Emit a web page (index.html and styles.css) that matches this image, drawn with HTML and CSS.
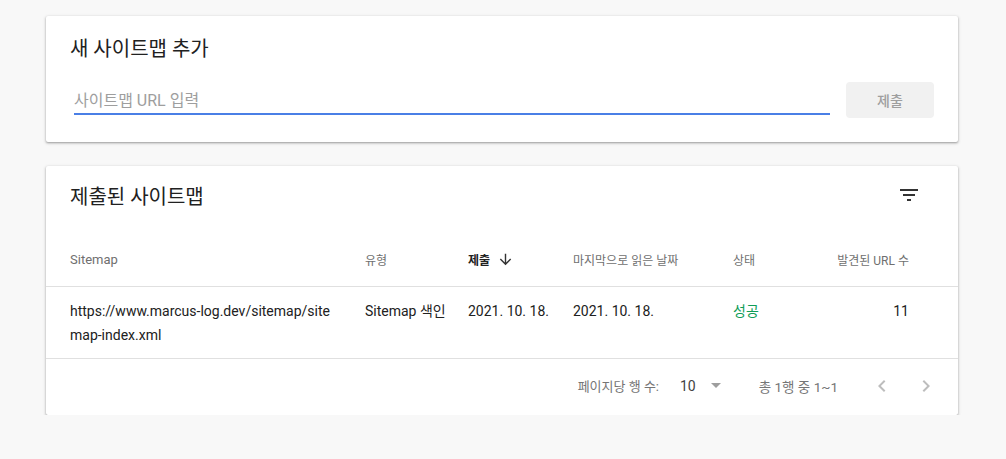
FILE: index.html
```html
<!DOCTYPE html>
<html lang="ko">
<head>
<meta charset="utf-8">
<title>Sitemaps</title>
<link rel="stylesheet" href="styles.css">
</head>
<body>
<main class="page">
  <section class="card add-card">
    <h2 class="card-title">새 사이트맵 추가</h2>
    <div class="form-row">
      <div class="field"><span class="placeholder">사이트맵 URL 입력</span></div>
      <button class="submit-btn" type="button">제출</button>
    </div>
  </section>

  <section class="card list-card">
    <div class="list-head">
      <h2 class="card-title">제출된 사이트맵</h2>
      <svg class="filter-icon" viewBox="0 0 24 24" width="24" height="24"><path d="M10 18h4v-2h-4v2zM3 6v2h18V6H3zm3 7h12v-2H6v2z" fill="#333"/></svg>
    </div>
    <div class="table">
      <div class="row head-row">
        <div class="cell latin">Sitemap</div>
        <div class="cell">유형</div>
        <div class="cell sorted">제출<svg class="sort-icon" viewBox="0 0 24 24" width="17" height="17"><path d="M20 12l-1.41-1.41L13 16.17V4h-2v12.17l-5.58-5.59L4 12l8 8 8-8z" fill="#333"/></svg></div>
        <div class="cell">마지막으로 읽은 날짜</div>
        <div class="cell">상태</div>
        <div class="cell num">발견된 URL 수</div>
      </div>
      <div class="row body-row">
        <div class="cell url"><span class="url-text">https://www.marcus-log.dev/sitemap/sitemap-index.xml</span></div>
        <div class="cell">Sitemap 색인</div>
        <div class="cell">2021. 10. 18.</div>
        <div class="cell">2021. 10. 18.</div>
        <div class="cell ok">성공</div>
        <div class="cell num">11</div>
      </div>
    </div>
    <div class="pager">
      <span class="pager-label">페이지당 행 수:</span>
      <span class="page-size">10<svg class="drop-icon" viewBox="0 0 10 5" width="10" height="5"><path d="M0 0l5 5 5-5z" fill="#9e9e9e"/></svg></span>
      <span class="range">총 1행 중 1~1</span>
      <svg class="chev chev-left" viewBox="0 0 24 24" width="24" height="24"><path d="M15.41 7.41L14 6l-6 6 6 6 1.41-1.41L10.83 12z" fill="#bdbdbd"/></svg>
      <svg class="chev" viewBox="0 0 24 24" width="24" height="24"><path d="M10 6L8.59 7.41 13.17 12l-4.58 4.59L10 18l6-6z" fill="#bdbdbd"/></svg>
    </div>
  </section>
</main>
</body>
</html>
```

FILE: styles.css
```css
* { box-sizing: border-box; }
html, body { margin: 0; padding: 0; }
body {
  background: #f8f8f8;
  font-family: Roboto, "Noto Sans CJK KR", sans-serif;
  color: #212121;
}
.page {
  padding: 16px 48px 0 46px;
  display: flex;
  flex-direction: column;
  gap: 24px;
}
.card {
  background: #fff;
  width: 912px;
  border-radius: 2px;
  box-shadow: 0 1px 2px rgba(0,0,0,0.28), 0 1px 3px 1px rgba(0,0,0,0.1);
}
.card-title {
  margin: 0;
  font-size: 20px;
  font-weight: 400;
  line-height: 28px;
  color: #212121;
}
.add-card { padding: 19px 24px 24px 24px; }
.form-row {
  margin-top: 19px;
  display: flex;
  align-items: flex-start;
  gap: 16px;
}
.field {
  flex: 1;
  margin-left: 4px;
  height: 33px;
  border-bottom: 2px solid #4a7fe6;
  padding-top: 7px;
  font-size: 16px;
  line-height: 24px;
}
.placeholder { color: #9e9e9e; }
.submit-btn {
  width: 88px;
  height: 36px;
  border: none;
  border-radius: 4px;
  background: #f1f1f1;
  color: #9e9e9e;
  font-family: inherit;
  font-size: 14px;
  font-weight: 500;
}
.list-head {
  height: 64px;
  padding: 17px 37px 0 24px;
  display: flex;
  justify-content: space-between;
  align-items: flex-start;
}
.row {
  display: grid;
  grid-template-columns: 295px 103px 105px 160px 1fr auto;
  padding: 0 49px 0 24px;
  border-bottom: 1px solid #e0e0e0;
}
.head-row {
  height: 57px;
  align-items: center;
  font-size: 12px;
  font-weight: 400;
  color: #6f6f6f;
  padding-top: 2px;
}
.head-row .latin { font-size: 13px; }
.sorted {
  color: #212121;
  font-weight: 700;
  display: flex;
  align-items: center;
}
.sort-icon { margin-left: 7px; }
.body-row {
  padding-top: 12px;
  padding-bottom: 11px;
  font-size: 14px;
  line-height: 24px;
  color: #212121;
}
.url-text {
  display: block;
  width: 268px;
  word-break: break-all;
}
.ok { color: #0f9d58; }
.num { text-align: right; }
.pager {
  height: 56px;
  display: flex;
  align-items: center;
  justify-content: flex-end;
  padding-right: 20px;
  padding-bottom: 3px;
  font-size: 13px;
  color: #757575;
}
.page-size {
  margin-left: 21px;
  font-size: 14px;
  color: #424242;
  display: flex;
  align-items: center;
}
.drop-icon { margin-left: 15px; }
.range { margin-left: 38px; font-size: 13.5px; }
.chev-left { margin-left: 32px; margin-right: 20px; }
```
